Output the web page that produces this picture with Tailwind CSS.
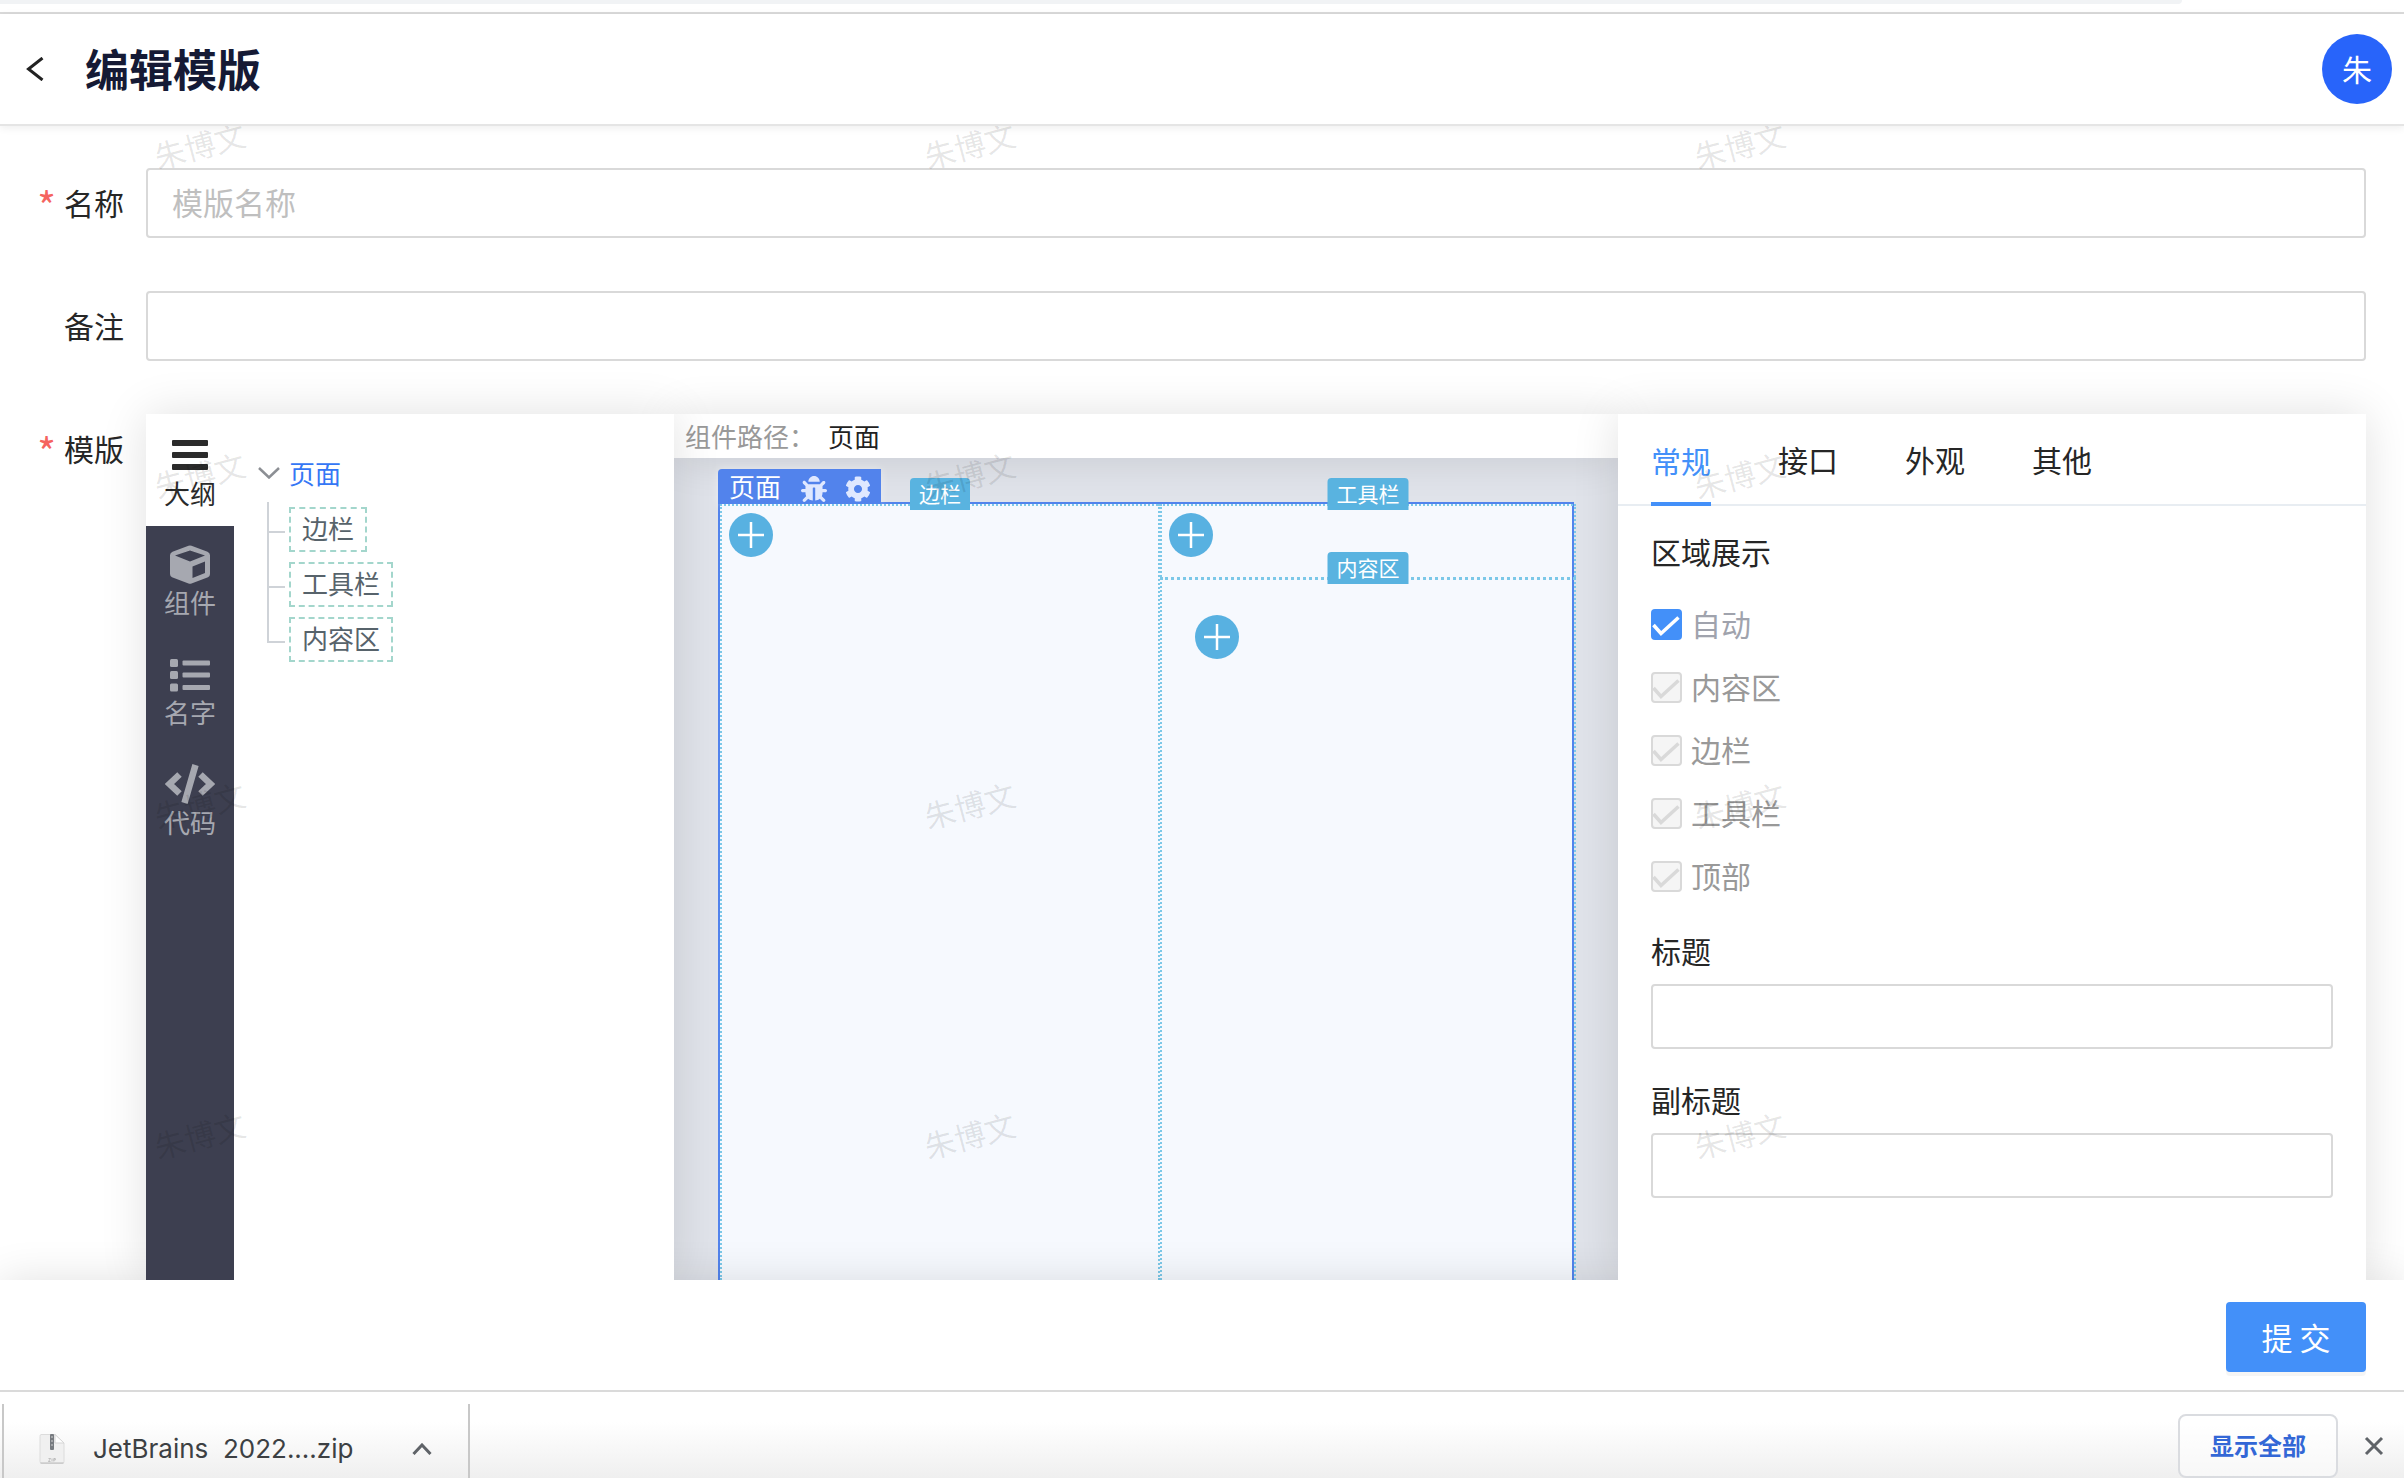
<!DOCTYPE html>
<html lang="zh-CN">
<head>
<meta charset="utf-8">
<title>编辑模版</title>
<script src="https://cdn.jsdelivr.net/npm/@tailwindcss/browser@4"></script>
</head>
<body class="flex h-screen flex-col overflow-hidden bg-white font-['Noto_Sans_CJK_SC',sans-serif] text-[30px] leading-[44px] text-[#262626]">

  <!-- browser toolbar edge -->
  <div class="flex h-[14px] shrink-0 flex-col justify-between border-b-2 border-[#dadada]">
    <div class="mr-[222px] h-1 rounded-br-full bg-[#f1f3f5]"></div>
  </div>

  <header class="relative z-40 flex h-[112px] shrink-0 items-center border-b-2 border-[#e5e5e5] bg-white pr-3 pl-[25px] shadow-[0_2px_8px_rgba(0,0,0,0.07)]">
    <button type="button" aria-label="返回" class="mr-[40px]">
      <svg class="h-6 w-5" viewBox="0 0 20 24" fill="none" stroke="#222" stroke-width="3"><path d="M17.500 1 3.500 12l14 11"/></svg>
    </button>
    <h1 class="flex-1 pb-[3px] text-[44px] leading-[60px] font-bold text-[#151a35]">编辑模版</h1>
    <div class="flex size-[70px] items-center justify-center rounded-full bg-[#2864fa] pb-[2px] text-[30px] text-white">朱</div>
  </header>

  <main class="relative flex min-h-0 flex-1 flex-col gap-[53px] overflow-hidden pt-[42px] pr-[38px]">
    <div class="flex h-[70px] shrink-0">
      <label for="name" class="flex w-[146px] items-center justify-end gap-[8px] pr-[22px] pb-[2px]"><span class="pt-[6px] text-[40px] text-[#f5645f]">*</span>名称</label>
      <input id="name" placeholder="模版名称" class="min-w-0 flex-1 rounded-[4px] border-2 border-[#d9d9d9] px-6 pb-[2px] text-[31px] placeholder:text-[#bfbfbf]">
    </div>
    <div class="flex h-[70px] shrink-0">
      <label for="remark" class="flex w-[146px] items-center justify-end pr-[22px] pb-[2px]">备注</label>
      <input id="remark" class="min-w-0 flex-1 rounded-[4px] border-2 border-[#d9d9d9] px-6 pb-[2px] text-[31px]">
    </div>

    <div class="flex min-h-0 flex-1">
      <div class="flex h-[70px] w-[146px] shrink-0 items-center justify-end gap-[8px] pr-[22px] pb-[2px]"><span class="pt-[6px] text-[40px] text-[#f5645f]">*</span>模版</div>

      <div class="flex min-w-0 flex-1">
        <!-- outline panel -->
        <section class="relative z-20 flex w-[528px] shrink-0 bg-white shadow-[0_0_44px_rgba(0,0,0,0.12)]">
          <nav class="flex w-[88px] shrink-0 flex-col bg-[#3d3f50] text-[26px] leading-[36px] text-[#a6a8b0]">
            <button type="button" class="flex h-[112px] flex-col items-center bg-white pt-[26px] text-[#2b2b2b]">
              <svg class="h-[30px] w-9" viewBox="0 0 36 30" fill="currentColor"><rect width="36" height="6" rx="1"/><rect y="12" width="36" height="6" rx="1"/><rect y="24" width="36" height="6" rx="1"/></svg>
              <span class="mt-[5px]">大纲</span>
            </button>
            <button type="button" class="flex h-[110px] flex-col items-center pt-[18px]">
              <svg class="size-10" viewBox="0 0 40 40" fill="currentColor" fill-rule="evenodd"><path d="M18.500 1.800q1.500-.7 3 0l16 6q2.500 1 2.500 3.500V30q0 2.200-2 3.200l-16.500 6.300q-1.500.6-3 0L2 33.200Q0 32.200 0 30V11.300Q0 8.800 2.500 7.800ZM20 6.500 5 11.500l15 6 15-6ZM22.500 22.500v11.500L35 29V17.500Z"/></svg>
              <span>组件</span>
            </button>
            <button type="button" class="flex h-[110px] flex-col items-center pt-[18px]">
              <svg class="size-10" viewBox="0 0 40 40" fill="currentColor"><rect y="5" width="8" height="8" rx="1.500"/><rect y="17" width="8" height="8" rx="1.500"/><rect y="29.500" width="8" height="8" rx="1.500"/><rect x="12.500" y="6.500" width="27.500" height="5" rx="1"/><rect x="12.500" y="18.500" width="27.500" height="5" rx="1"/><rect x="12.500" y="31" width="27.500" height="5" rx="1"/></svg>
              <span>名字</span>
            </button>
            <button type="button" class="flex h-[110px] flex-col items-center pt-[18px]">
              <svg class="h-10 w-[50px]" viewBox="0 0 50 40" fill="none" stroke="currentColor" stroke-width="6.500"><path d="M14.500 10.500 4.500 20l10 9.500M35.500 10.500l10 9.500-10 9.500M30.500 1 19.500 39"/></svg>
              <span>代码</span>
            </button>
          </nav>
          <div class="flex-1 pt-[40px] pl-[24px] text-[26px] leading-[38px] text-[#57636b]">
            <button type="button" class="flex items-center gap-[9px] text-[#3577f5]">
              <svg class="h-3 w-[22px]" viewBox="0 0 22 12" fill="none" stroke="#8c8f94" stroke-width="2.500"><path d="m1 1 10 9.500L21 1"/></svg>页面
            </button>
            <ul class="pt-[10px] pl-[9px]">
              <li class="flex h-[55px]">
                <span class="mr-1 w-[18px] border-l-2 border-[#cfd3d8]"><span class="block h-[31px] border-b-2 border-[#cfd3d8]"></span></span>
                <span class="my-[5px] flex items-center border-2 border-dashed border-[#a3d6cc] px-[11px] pb-[3px]">边栏</span>
              </li>
              <li class="flex h-[55px]">
                <span class="mr-1 w-[18px] border-l-2 border-[#cfd3d8]"><span class="block h-[31px] border-b-2 border-[#cfd3d8]"></span></span>
                <span class="my-[5px] flex items-center border-2 border-dashed border-[#a3d6cc] px-[11px] pb-[3px]">工具栏</span>
              </li>
              <li class="flex h-[55px]">
                <span class="mr-1 h-[31px] w-[18px] border-b-2 border-l-2 border-[#cfd3d8]"></span>
                <span class="my-[5px] flex items-center border-2 border-dashed border-[#a3d6cc] px-[11px] pb-[3px]">内容区</span>
              </li>
            </ul>
          </div>
        </section>

        <!-- canvas -->
        <section class="flex min-w-0 flex-1 flex-col">
          <div class="relative z-10 flex h-[44px] shrink-0 items-center bg-white px-[11px] text-[26px] text-[#999] shadow-[0_0_44px_rgba(0,0,0,0.12)]">组件路径：<a href="#" class="ml-[13px] text-[#222]">页面</a></div>
          <div class="flex min-h-0 flex-1 flex-col bg-[#e0e3ea] px-[44px] pt-[44px]">
            <div class="relative z-10 grid flex-1 grid-cols-[438fr_414fr] border-x-2 border-t-2 border-[#5283ec] bg-[#f6f9fe]">
              <div class="absolute bottom-full -left-[2px] flex h-[35px] items-center rounded-tl-[4px] bg-[#5283ec] pr-[10px] pl-[11px] text-[26px] leading-[34px] text-white shadow-[0_0_10px_rgba(255,255,255,0.4)]">
                <span class="pb-[2px]">页面</span>
                <button type="button" aria-label="调试" class="mt-1 ml-[20px]"><svg class="size-[26px]" viewBox="0 0 512 512" fill="#dfe8ff"><path d="M511.988 288.9c-.478 17.43-15.217 31.1-32.653 31.1H424v16c0 21.864-4.882 42.584-13.600 61.145l60.228 60.228c12.496 12.497 12.496 32.758 0 45.255-12.498 12.497-32.759 12.496-45.256 0l-54.736-54.736C345.886 467.965 314.351 480 280 480V236c0-6.627-5.373-12-12-12h-24c-6.627 0-12 5.373-12 12v244c-34.351 0-65.886-12.035-90.636-32.108l-54.736 54.736c-12.498 12.497-32.759 12.496-45.256 0-12.496-12.497-12.496-32.758 0-45.255l60.228-60.228C92.882 378.584 88 357.864 88 336v-16H32.666C15.230 320 .491 306.330.013 288.900-.484 270.816 14.028 256 32 256h56v-58.745l-46.628-46.628c-12.496-12.497-12.496-32.758 0-45.255 12.498-12.497 32.758-12.497 45.256 0L141.255 160h229.489l54.627-54.627c12.498-12.497 32.758-12.497 45.256 0 12.496 12.497 12.496 32.758 0 45.255L424 197.255V256h56c17.972 0 32.484 14.816 31.988 32.900zM257 0c-61.856 0-112 50.144-112 112h224C369 50.144 318.856 0 257 0z"/></svg></button>
                <button type="button" aria-label="设置" class="mt-1 ml-[18px]"><svg class="size-[26px]" viewBox="0 0 512 512" fill="#dfe8ff"><path d="M487.400 315.700l-42.600-24.600c4.300-23.200 4.300-47 0-70.200l42.600-24.600c4.900-2.800 7.100-8.600 5.500-14-11.100-35.600-30-67.800-54.700-94.600-3.800-4.100-10-5.100-14.800-2.300L380.800 110c-17.900-15.400-38.500-27.300-60.800-35.100V25.800c0-5.600-3.900-10.500-9.400-11.700-36.700-8.200-74.300-7.800-109.200 0-5.500 1.200-9.400 6.100-9.400 11.700V75c-22.200 7.900-42.800 19.800-60.800 35.100L88.700 85.500c-4.900-2.800-11-1.900-14.800 2.300-24.700 26.700-43.600 58.900-54.700 94.600-1.700 5.400.6 11.200 5.500 14L67.300 221c-4.300 23.200-4.300 47 0 70.200l-42.600 24.600c-4.900 2.800-7.100 8.600-5.500 14 11.100 35.600 30 67.800 54.700 94.600 3.800 4.100 10 5.100 14.800 2.300l42.600-24.600c17.900 15.400 38.500 27.300 60.800 35.100v49.200c0 5.600 3.900 10.500 9.400 11.700 36.700 8.200 74.300 7.800 109.200 0 5.500-1.200 9.400-6.100 9.400-11.700v-49.200c22.200-7.900 42.800-19.800 60.800-35.100l42.600 24.600c4.900 2.800 11 1.900 14.800-2.300 24.700-26.700 43.600-58.900 54.700-94.600 1.500-5.500-.7-11.300-5.600-14.100zM256 336c-44.100 0-80-35.900-80-80s35.900-80 80-80 80 35.900 80 80-35.900 80-80 80z"/></svg></button>
              </div>

              <div class="relative border-t-2 border-l-2 border-dotted border-[#7cc8e8] px-[7px] pt-[7px]">
                <span class="absolute -top-[28px] left-1/2 -translate-x-1/2 rounded-t-[4px] bg-[#59b3e0] px-[9px] pb-[2px] text-[21px] leading-[30px] text-white">边栏</span>
                <button type="button" aria-label="添加到边栏" class="block size-[44px] rounded-full bg-[#58b1e1]"><svg viewBox="0 0 44 44" fill="none" stroke="#fff" stroke-width="2.500"><path d="M22 9v26M9 22h26"/></svg></button>
              </div>
              <div class="-mr-[4px] flex flex-col border-l-2 border-dotted border-[#7cc8e8]">
                <div class="relative h-[73px] border-x-2 border-t-2 border-dotted border-[#7cc8e8] px-[7px] pt-[7px]">
                  <span class="absolute -top-[28px] left-1/2 -translate-x-1/2 rounded-t-[4px] bg-[#59b3e0] px-[9px] pb-[2px] text-[21px] leading-[30px] whitespace-nowrap text-white">工具栏</span>
                  <button type="button" aria-label="添加到工具栏" class="block size-[44px] rounded-full bg-[#58b1e1]"><svg viewBox="0 0 44 44" fill="none" stroke="#fff" stroke-width="2.500"><path d="M22 9v26M9 22h26"/></svg></button>
                </div>
                <div class="relative flex-1 border-x-2 border-t-3 border-dotted border-[#7cc8e8] px-[33px] pt-[35px]">
                  <span class="absolute -top-[28px] left-1/2 -translate-x-1/2 rounded-t-[4px] bg-[#59b3e0] px-[9px] pb-[2px] text-[21px] leading-[30px] whitespace-nowrap text-white">内容区</span>
                  <button type="button" aria-label="添加到内容区" class="block size-[44px] rounded-full bg-[#58b1e1]"><svg viewBox="0 0 44 44" fill="none" stroke="#fff" stroke-width="2.500"><path d="M22 9v26M9 22h26"/></svg></button>
                </div>
              </div>
            </div>
          </div>
        </section>

        <!-- property panel -->
        <section class="relative z-20 w-[748px] shrink-0 bg-white shadow-[0_0_44px_rgba(0,0,0,0.12)]">
          <div class="flex h-[92px] gap-[67px] border-b-2 border-[#e8edf2] px-[33px]">
            <button type="button" class="-mb-[2px] border-b-4 border-[#4390f9] pt-[4px] text-[#4390f9]">常规</button>
            <button type="button">接口</button>
            <button type="button">外观</button>
            <button type="button">其他</button>
          </div>
          <div class="px-[33px] pt-[23px]">
            <h2>区域展示</h2>
            <div class="mt-[18px] flex flex-col text-[#999]">
              <label class="flex h-[63px] items-center gap-[9px] text-[#a0a3ad]"><span class="mt-1 grid size-[31px]"><input type="checkbox" checked class="col-start-1 row-start-1 appearance-none rounded-[4px] bg-[#4390f9]"><svg class="pointer-events-none col-start-1 row-start-1" viewBox="0 0 31 31" fill="none" stroke="#fff" stroke-width="3.500"><path d="m2.500 16 7.500 8.500L27.500 8.500"/></svg></span>自动</label>
              <label class="flex h-[63px] items-center gap-[9px]"><span class="mt-1 grid size-[31px]"><input type="checkbox" checked disabled class="col-start-1 row-start-1 appearance-none rounded-[4px] border-2 border-[#d9d9d9] bg-[#f5f5f5]"><svg class="pointer-events-none col-start-1 row-start-1" viewBox="0 0 31 31" fill="none" stroke="#d9d9d9" stroke-width="3.500"><path d="m2.500 16 7.500 8.500L27.500 8.500"/></svg></span>内容区</label>
              <label class="flex h-[63px] items-center gap-[9px]"><span class="mt-1 grid size-[31px]"><input type="checkbox" checked disabled class="col-start-1 row-start-1 appearance-none rounded-[4px] border-2 border-[#d9d9d9] bg-[#f5f5f5]"><svg class="pointer-events-none col-start-1 row-start-1" viewBox="0 0 31 31" fill="none" stroke="#d9d9d9" stroke-width="3.500"><path d="m2.500 16 7.500 8.500L27.500 8.500"/></svg></span>边栏</label>
              <label class="flex h-[63px] items-center gap-[9px]"><span class="mt-1 grid size-[31px]"><input type="checkbox" checked disabled class="col-start-1 row-start-1 appearance-none rounded-[4px] border-2 border-[#d9d9d9] bg-[#f5f5f5]"><svg class="pointer-events-none col-start-1 row-start-1" viewBox="0 0 31 31" fill="none" stroke="#d9d9d9" stroke-width="3.500"><path d="m2.500 16 7.500 8.500L27.500 8.500"/></svg></span>工具栏</label>
              <label class="flex h-[63px] items-center gap-[9px]"><span class="mt-1 grid size-[31px]"><input type="checkbox" checked disabled class="col-start-1 row-start-1 appearance-none rounded-[4px] border-2 border-[#d9d9d9] bg-[#f5f5f5]"><svg class="pointer-events-none col-start-1 row-start-1" viewBox="0 0 31 31" fill="none" stroke="#d9d9d9" stroke-width="3.500"><path d="m2.500 16 7.500 8.500L27.500 8.500"/></svg></span>顶部</label>
            </div>
            <label for="title" class="mt-[22px] block">标题</label>
            <input id="title" class="mt-[12px] block h-[65px] w-full rounded-[4px] border-2 border-[#d9d9d9] px-4">
            <label for="subtitle" class="mt-[28px] block">副标题</label>
            <input id="subtitle" class="mt-[12px] block h-[65px] w-full rounded-[4px] border-2 border-[#d9d9d9] px-4">
          </div>
        </section>
      </div>
    </div>

    <!-- watermark layer -->
    <div aria-hidden="true" class="pointer-events-none absolute inset-0 z-30 grid auto-rows-[330px] grid-cols-[repeat(3,770px)] overflow-hidden pt-px pl-[153px] text-[31px] leading-[36px] text-black/10">
      <span class="size-max -rotate-15">朱博文</span><span class="size-max -rotate-15">朱博文</span><span class="size-max -rotate-15">朱博文</span>
      <span class="size-max -rotate-15">朱博文</span><span class="size-max -rotate-15">朱博文</span><span class="size-max -rotate-15">朱博文</span>
      <span class="size-max -rotate-15">朱博文</span><span class="size-max -rotate-15">朱博文</span><span class="size-max -rotate-15">朱博文</span>
      <span class="size-max -rotate-15">朱博文</span><span class="size-max -rotate-15">朱博文</span><span class="size-max -rotate-15">朱博文</span>
    </div>
  </main>

  <footer class="relative z-10 flex h-[112px] shrink-0 items-center justify-end border-b-2 border-[#dadada] bg-white pt-1 pr-[38px] shadow-[0_0_44px_rgba(0,0,0,0.12)]">
    <button type="submit" class="h-[70px] w-[140px] rounded-[4px] bg-[#4390f9] text-[31px] text-white shadow-[0_4px_0_rgba(0,0,0,0.04)]">提 交</button>
  </footer>

  <!-- download shelf -->
  <div class="relative z-20 flex h-[86px] shrink-0 bg-linear-to-b from-white from-35% to-[#efefef] pr-[20px] pl-[2px]">
    <div class="mt-3 flex w-[468px] items-center border-x-2 border-[#c8c8c8] pt-4 pr-[36px] pl-[35px] font-[Inter,'Noto_Sans_CJK_SC',sans-serif] text-[26px] text-[#3c4043]">
      <svg class="mr-[28px] h-[30px] w-[26px]" viewBox="0 0 26 30"><path d="M2 .5h14L25 9v18.500q0 2-2 2H3q-2 0-2-2v-25q0-2 1-2Z" fill="#f0f0f0" stroke="#dcdcdc"/><path d="M16 .5V9h9Z" fill="#fff" stroke="#d5d5d5"/><path d="M1.500 29h23" stroke="#bcbcbc"/><rect x="11" width="4" height="16" rx="1" fill="#777b80"/><path d="M13 2v10" stroke="#d0d0d0" stroke-dasharray="2 2"/><path d="M9.500 24.500h2l-2 3h2M13 24.500v3M14.800 27.500v-3h1.500v1.500h-1.500" fill="none" stroke="#aaa" stroke-width=".7"/></svg>
      <span class="flex-1 whitespace-pre">JetBrains  2022....zip</span>
      <button type="button" aria-label="更多"><svg class="h-3 w-5" viewBox="0 0 20 12" fill="none" stroke="#5f6368" stroke-width="3"><path d="m1.500 11 8.500-9 8.500 9"/></svg></button>
    </div>
    <div class="ml-auto flex items-center gap-[26px] pt-[21px]">
      <button type="button" class="h-[64px] w-[160px] rounded-[8px] border-2 border-[#dadce0] bg-white/50 pb-[2px] text-[24px] font-bold text-[#3367d6]">显示全部</button>
      <button type="button" aria-label="关闭"><svg class="size-5" viewBox="0 0 20 20" fill="none" stroke="#5f6368" stroke-width="3"><path d="m2 2 16 16M18 2 2 18"/></svg></button>
    </div>
  </div>
</body>
</html>
